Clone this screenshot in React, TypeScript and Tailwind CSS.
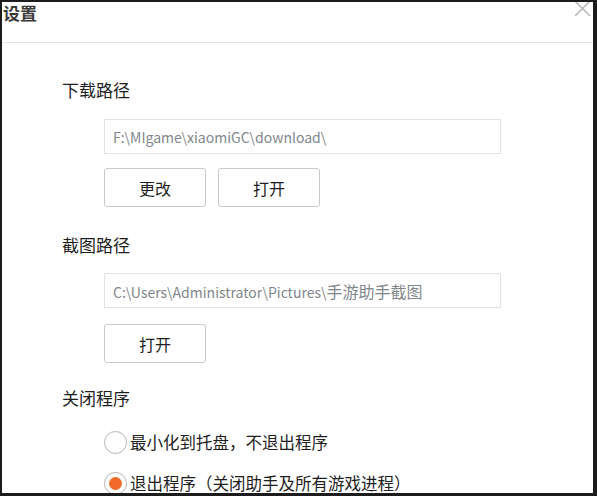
import * as React from "react";

const cjk = "font-['Noto_Sans_CJK_SC','Noto_Sans',sans-serif]";

function PathField({ value, tail }: { value: string; tail?: string }) {
    return (
        <div className="ml-[42px] flex h-[35px] w-[397px] items-center border border-[#e3e3e3] bg-white pl-[8px]">
            <span className="text-[14px] leading-none text-[#7f878c]">
                {value}
                {tail && <span className="text-[16px]">{tail}</span>}
            </span>
        </div>
    );
}

function Button({ label }: { label: string }) {
    return (
        <button className="flex h-[39px] w-[102px] items-center justify-center rounded-[3px] border border-[#c9c9c9] bg-white text-[16px] text-[#1e1e1e]">
            {label}
        </button>
    );
}

function Radio({ label, checked }: { label: string; checked?: boolean }) {
    return (
        <div className="ml-[42px] flex items-center gap-[3px]">
            <span className="flex h-[23px] w-[23px] shrink-0 items-center justify-center rounded-full border-[1.5px] border-[#b4b4b4] bg-white">
                {checked && <span className="h-[13px] w-[13px] rounded-full bg-[#f26b2b]" />}
            </span>
            <span className="-mt-[2px] text-[16.5px] leading-[24px] text-[#1e1e1e]">{label}</span>
        </div>
    );
}

export default function App() {
    return (
        <div className={`${cjk} h-[496px] w-[597px] overflow-hidden bg-[#1c1c1c] pb-[3px] pl-[2px] pr-[4px] pt-[2px]`}>
            <div className="flex h-full flex-col overflow-hidden bg-white">
                {/* Header */}
                <div className="relative h-[40px] shrink-0">
                    <span className="ml-[1px] block pt-[1px] text-[17px] font-bold leading-[20px] text-[#3a3a3a]">设置</span>
                    <svg
                        className="absolute -top-[3px] right-[1px]"
                        width="19"
                        height="19"
                        viewBox="0 0 19 19"
                        fill="none"
                        stroke="#b9b9b9"
                        strokeWidth="1.6"
                    >
                        <path d="M2 2 L17 17 M17 2 L2 17" />
                    </svg>
                </div>
                <div className="h-px shrink-0 bg-[#e4e4e4]" />

                <div className="flex flex-col pl-[60px]">
                    <span className="mt-[36px] text-[17px] leading-[22px] text-[#1e1e1e]">下载路径</span>
                    <div className="mt-[18px]">
                        <PathField value="F:\MIgame\xiaomiGC\download\" />
                    </div>
                    <div className="ml-[42px] mt-[14px] flex gap-[12px]">
                        <Button label="更改" />
                        <Button label="打开" />
                    </div>

                    <span className="mt-[27px] text-[17px] leading-[22px] text-[#1e1e1e]">截图路径</span>
                    <div className="mt-[17px]">
                        <PathField value="C:\Users\Administrator\Pictures\" tail="手游助手截图" />
                    </div>
                    <div className="ml-[42px] mt-[16px] flex">
                        <Button label="打开" />
                    </div>

                    <span className="mt-[24px] text-[17px] leading-[22px] text-[#1e1e1e]">关闭程序</span>
                    <div className="mt-[22px]">
                        <Radio label="最小化到托盘，不退出程序" />
                    </div>
                    <div className="mt-[18px]">
                        <Radio label="退出程序（关闭助手及所有游戏进程）" checked />
                    </div>
                </div>
            </div>
        </div>
    );
}
